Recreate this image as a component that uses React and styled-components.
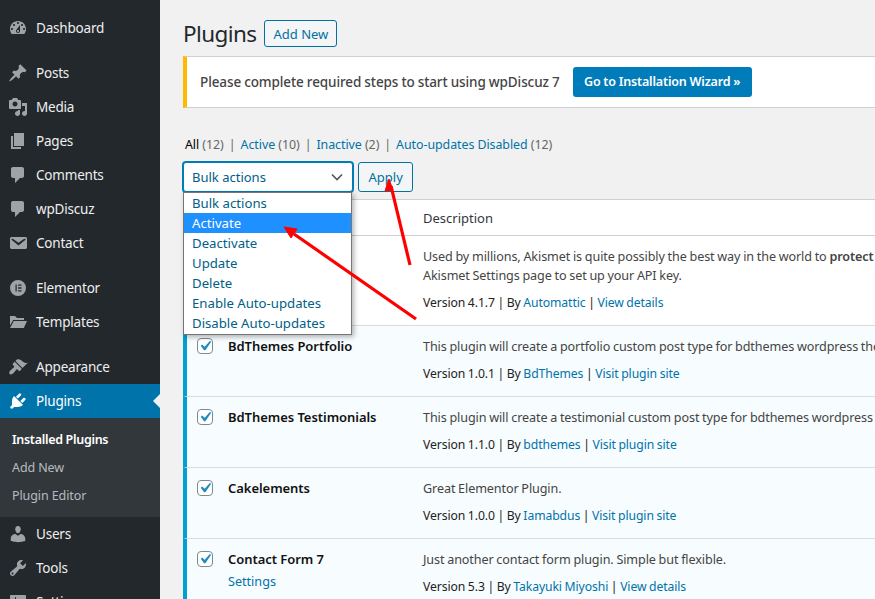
import React from 'react';
import styled, { createGlobalStyle } from 'styled-components';

const GlobalStyle = createGlobalStyle`
  html, body {
    margin: 0;
    padding: 0;
    background: #f1f1f1;
    overflow: hidden;
  }
  body {
    font-family: 'Noto Sans', 'Open Sans', sans-serif;
    font-size: 13px;
    color: #444;
  }
  * {
    box-sizing: border-box;
  }
`;

const Page = styled.div`
  display: flex;
  position: relative;
  width: 875px;
  height: 599px;
  overflow: hidden;
`;

/* sidebar */
const Sidebar = styled.nav`
  flex: 0 0 160px;
  padding-top: 11px;
  background: #23282d;
`;

const MenuItem = styled.div`
  display: flex;
  align-items: center;
  position: relative;
  height: 34px;
  margin-bottom: ${(p) => (p.$sep ? '11px' : '0')};
  padding-left: 8px;
  gap: 8px;
  font-size: 13.5px;
  letter-spacing: -0.2px;
  color: ${(p) => (p.$active ? '#fff' : '#eee')};
  background: ${(p) => (p.$active ? '#0073aa' : 'transparent')};

  svg {
    flex: none;
    width: 20px;
    height: 20px;
    fill: ${(p) => (p.$active ? '#fff' : '#9ea3a8')};
  }

  ${(p) =>
    p.$active &&
    `&::after {
      content: '';
      position: absolute;
      right: 0;
      top: 10px;
      border: 7px solid transparent;
      border-right-color: #f1f1f1;
      border-left-width: 0;
    }`}
`;

const SubMenu = styled.div`
  padding: 8px 0 7px;
  background: #32373c;
`;

const SubItem = styled.div`
  height: 28px;
  padding-left: 12px;
  line-height: 28px;
  font-size: 12.5px;
  font-weight: ${(p) => (p.$current ? 600 : 400)};
  letter-spacing: ${(p) => (p.$current ? '-0.3px' : '-0.1px')};
  color: ${(p) => (p.$current ? '#fff' : 'rgba(240, 245, 250, 0.7)')};
`;

/* main column */
const Main = styled.main`
  flex: 1;
  min-width: 0;
  padding: 20px 0 0 23px;
`;

const TitleRow = styled.div`
  display: flex;
  align-items: center;
  height: 27px;
  gap: 8px;
`;

const Title = styled.h1`
  margin: 0;
  font-size: 22.5px;
  font-weight: 400;
  letter-spacing: -0.6px;
  color: #23282d;
`;

const OutlineButton = styled.button`
  height: ${(p) => p.$height || '27px'};
  padding: 0 ${(p) => p.$pad || '8px'};
  border: 1px solid #0071a1;
  border-radius: 3px;
  background: #f3f5f6;
  font: inherit;
  color: #0071a1;
`;

const Notice = styled.div`
  display: flex;
  align-items: center;
  height: 52px;
  margin-top: 9px;
  padding-left: 13px;
  gap: 13px;
  background: #fff;
  border: 1px solid #ccd0d4;
  border-width: 1px 0 1px 4px;
  border-left-color: #ffb900;
  font-size: 13.5px;
  font-weight: 500;
  letter-spacing: -0.1px;
  word-spacing: -0.3px;
  color: #444;
`;

const WizardButton = styled.div`
  height: 30px;
  padding: 0 11.5px;
  border-radius: 3px;
  background: #007cba;
  color: #fff;
  line-height: 30px;
  font-size: 12.5px;
  font-weight: 600;
  letter-spacing: -0.15px;
`;

const Filters = styled.div`
  display: flex;
  height: 20px;
  margin-top: 26px;
  padding-left: 2px;
  line-height: 21px;
  gap: 5px;
  font-size: 12.4px;
  letter-spacing: -0.05px;
  color: #666;
  white-space: pre;
`;

const Link = styled.a`
  color: #0073aa;
`;

const CurrentFilter = styled.span`
  color: #000;
`;

const Toolbar = styled.div`
  display: flex;
  position: relative;
  height: 30px;
  margin-top: 8px;
  gap: 5px;
  z-index: 2;
`;

const Select = styled.div`
  display: flex;
  align-items: center;
  justify-content: space-between;
  width: 170px;
  padding: 0 8px;
  border: 1px solid #007cba;
  border-radius: 3px;
  box-shadow: 0 0 0 1px #007cba;
  background: #fff;
  color: #016087;
`;

const Dropdown = styled.div`
  position: absolute;
  left: 0;
  top: 30px;
  width: 169px;
  padding: 0 0 1px;
  border: 1px solid #767676;
  background: #fff;
  box-shadow: 2px 2px 5px rgba(0, 0, 0, 0.3);
`;

const Option = styled.div`
  height: 20px;
  padding-left: 8px;
  line-height: 20px;
  font-size: 13.2px;
  color: ${(p) => (p.$selected ? '#fff' : '#016087')};
  background: ${(p) => (p.$selected ? '#1e90ff' : 'transparent')};
`;

/* plugin table */
const Table = styled.div`
  width: 1100px;
  margin-top: 7px;
  background: #fff;
  border-top: 1px solid #ccd0d4;
`;

const HeadRow = styled.div`
  height: 36px;
  padding-left: 240px;
  border-bottom: 1px solid #ccd0d4;
  line-height: 36px;
  color: #32373c;
`;

const Row = styled.div`
  display: grid;
  grid-template-columns: 41px 195px 1fr;
  height: ${(p) => p.$height || '71px'};
  padding-top: 11px;
  border-left: 4px solid ${(p) => (p.$active ? '#00a0d2' : '#fff')};
  border-bottom: 1px solid #dcdcde;
  background: ${(p) => (p.$active ? '#f7fcfe' : '#fff')};
  line-height: 19px;
`;

const CheckCell = styled.div`
  padding: 1px 0 0 10px;
`;

const CheckBox = styled.div`
  display: flex;
  align-items: center;
  justify-content: center;
  width: 16px;
  height: 16px;
  border: 1px solid #7e8993;
  border-radius: 4px;
  background: #fff;

  svg {
    flex: none;
    width: 20px;
    height: 20px;
    fill: #1e8cbe;
  }
`;

const PluginName = styled.div`
  font-weight: 600;
  letter-spacing: -0.05px;
  color: #111;
`;

const RowAction = styled.div`
  margin-top: 3px;
  font-size: 12.6px;
`;

const Desc = styled.div`
  font-size: 12.6px;
  letter-spacing: -0.1px;
  word-spacing: -0.4px;
  white-space: nowrap;
  color: #444;

  strong {
    font-weight: 600;
  }
`;

const Meta = styled.div`
  margin-top: 8px;
  font-size: 12.2px;
  letter-spacing: -0.1px;
  word-spacing: -0.4px;
  white-space: nowrap;
  color: #222;
`;

const Arrows = styled.svg`
  position: absolute;
  left: 0;
  top: 0;
  z-index: 3;
  pointer-events: none;
`;

const icons = {
  dashboard:
    'M3.76 16h12.48c1.1-1.37 1.76-3.11 1.76-5 0-4.42-3.58-8-8-8s-8 3.58-8 8c0 1.89.66 3.63 1.76 5zM10 4c.55 0 1 .45 1 1s-.45 1-1 1-1-.45-1-1 .45-1 1-1zM6 6c.55 0 1 .45 1 1s-.45 1-1 1-1-.45-1-1 .45-1 1-1zm8 0c.55 0 1 .45 1 1s-.45 1-1 1-1-.45-1-1 .45-1 1-1zm-5.37 5.55L12 7v6c0 1.1-.9 2-2 2s-2-.9-2-2c0-.57.24-1.08.63-1.45zM4 10c.55 0 1 .45 1 1s-.45 1-1 1-1-.45-1-1 .45-1 1-1zm12 0c.55 0 1 .45 1 1s-.45 1-1 1-1-.45-1-1 .45-1 1-1zm-5 3c0-.55-.45-1-1-1s-1 .45-1 1 .45 1 1 1 1-.45 1-1z',
  post: 'M10.44 3.02l1.82-1.82 6.36 6.35-1.83 1.82c-1.05-.68-2.48-.57-3.41.36l-.75.75c-.92.93-1.04 2.35-.35 3.41l-1.83 1.82-2.41-2.41-2.8 2.79c-.42.42-3.38 2.71-3.8 2.29s1.86-3.39 2.28-3.81l2.79-2.79L4.1 9.36l1.83-1.82c1.05.69 2.48.57 3.4-.36l.75-.75c.93-.92 1.05-2.35.36-3.41z',
  media:
    'M13 11V4c0-.55-.45-1-1-1h-1.67L9 1H5L3.67 3H2c-.55 0-1 .45-1 1v7c0 .55.45 1 1 1h10c.55 0 1-.45 1-1zM7 4.5c1.38 0 2.5 1.12 2.5 2.5S8.38 9.5 7 9.5 4.5 8.38 4.5 7 5.62 4.5 7 4.5zM14 6h5v10.5c0 1.38-1.12 2.5-2.5 2.5S14 17.88 14 16.5s1.12-2.5 2.5-2.5c.17 0 .34.02.5.05V9h-3V6zm-4 8.05V13h2v3.5c0 1.38-1.12 2.5-2.5 2.5S7 17.88 7 16.5 8.12 14 9.5 14c.17 0 .34.02.5.05z',
  page: 'M6 15V2h10v13H6zm-1 1h8v2H3V5h2v11z',
  comment:
    'M5 2h9c1.1 0 2 .9 2 2v7c0 1.1-.9 2-2 2h-2l-5 5v-5H5c-1.1 0-2-.9-2-2V4c0-1.1.9-2 2-2z',
  email:
    'M3.87 4h13.25C18.37 4 19 4.59 19 5.79v8.42c0 1.19-.63 1.79-1.88 1.79H3.87c-1.25 0-1.88-.6-1.88-1.79V5.79c0-1.2.63-1.79 1.88-1.79zm6.62 8.6l6.74-5.53c.24-.2.43-.66.13-1.07-.29-.41-.82-.42-1.17-.17l-5.7 3.86L4.8 5.83c-.35-.25-.88-.24-1.17.17-.3.41-.11.87.13 1.07z',
  elementor:
    'M10 2a8 8 0 1 0 0 16 8 8 0 0 0 0-16zM7.5 6.5h1.2v7H7.5zm2.6 0h3.4v1.3h-3.4zm0 2.85h3.4v1.3h-3.4zm0 2.85h3.4v1.3h-3.4z',
  folder: 'M2 4h5l2 2h7v2H5.2L2 13.5zM5.8 9H19l-3.2 7H2z',
  appearance:
    'M14.48 11.06L7.41 3.99l1.5-1.5c.5-.56 2.3-.47 3.51.32 1.21.8 1.43 1.28 2.91 2.1 1.18.64 2.45 1.26 4.45.85zm-.71.71L6.7 4.7 4.93 6.47c-.39.39-.39 1.02 0 1.41l1.06 1.06c.39.39.39 1.03 0 1.42-.6.6-3.4 2.5-4.4 4.2-.5.9-.6 1.7.1 2.4.7.7 1.5.6 2.4.1 1.7-1 3.6-3.8 4.2-4.4.39-.39 1.03-.39 1.42 0l1.06 1.06c.39.39 1.02.39 1.41 0z',
  plugin:
    'M13.11 4.36L9.87 7.6 8 5.73l3.24-3.24c.35-.34 1.05-.2 1.56.32.52.51.66 1.21.31 1.55zm-8 1.77l.91-1.12 9.01 9.01-1.19.84c-.71.71-2.63 1.16-3.82 1.16H6.14L4.9 17.26c-.59.59-1.54.59-2.12 0-.59-.58-.59-1.53 0-2.12l1.24-1.24v-3.88c0-1.13.4-3.19 1.09-3.89zm7.26 3.97l3.24-3.24c.34-.35 1.04-.21 1.55.31.52.51.66 1.21.31 1.55l-3.24 3.25z',
  users:
    'M10 9.25c-2.27 0-2.73-3.44-2.73-3.44C7 4.02 7.82 2 9.97 2c2.16 0 2.98 2.02 2.71 3.81 0 0-.41 3.44-2.68 3.44zm0 2.57L12.72 10c2.39 0 4.52 2.33 4.52 4.53v2.49s-3.65 1.13-7.24 1.13c-3.65 0-7.24-1.13-7.24-1.13v-2.49c0-2.25 1.94-4.48 4.47-4.48z',
  tools:
    'M16.68 9.77c-1.34 1.34-3.3 1.67-4.95.99l-5.41 6.52c-.99.99-2.59.99-3.58 0s-.99-2.59 0-3.57l6.52-5.42c-.68-1.65-.35-3.61.99-4.95 1.28-1.28 3.12-1.62 4.72-1.06l-2.89 2.89 2.82 2.82 2.86-2.87c.53 1.58.18 3.39-1.08 4.65zM3.81 16.21c.4.39 1.04.39 1.43 0 .4-.4.4-1.04 0-1.43-.39-.4-1.03-.4-1.43 0-.39.39-.39 1.03 0 1.43z',
  settings:
    'M18 16V4c0-.55-.45-1-1-1H3c-.55 0-1 .45-1 1v12c0 .55.45 1 1 1h14c.55 0 1-.45 1-1zM8 11h1c.55 0 1 .45 1 1s-.45 1-1 1H8v1.5c0 .28-.22.5-.5.5s-.5-.22-.5-.5V13H6c-.55 0-1-.45-1-1s.45-1 1-1h1V5.5c0-.28.22-.5.5-.5s.5.22.5.5V7h1c.55 0 1 .45 1 1s-.45 1-1 1h-1v5.5c0 .28-.22.5-.5.5s-.5-.22-.5-.5V9z',
};

const Icon = ({ name }) => (
  <svg viewBox="0 0 20 20">
    <path fillRule="evenodd" d={icons[name]} />
  </svg>
);

const bulkOptions = [
  'Bulk actions',
  'Activate',
  'Deactivate',
  'Update',
  'Delete',
  'Enable Auto-updates',
  'Disable Auto-updates',
];

const plugins = [
  {
    name: 'BdThemes Portfolio',
    desc: 'This plugin will create a portfolio custom post type for bdthemes wordpress theme and more',
    version: '1.0.1',
    by: 'BdThemes',
    link: 'Visit plugin site',
  },
  {
    name: 'BdThemes Testimonials',
    desc: 'This plugin will create a testimonial custom post type for bdthemes wordpress theme and more',
    version: '1.1.0',
    by: 'bdthemes',
    link: 'Visit plugin site',
  },
  {
    name: 'Cakelements',
    desc: 'Great Elementor Plugin.',
    version: '1.0.0',
    by: 'Iamabdus',
    link: 'Visit plugin site',
  },
  {
    name: 'Contact Form 7',
    action: 'Settings',
    desc: 'Just another contact form plugin. Simple but flexible.',
    version: '5.3',
    by: 'Takayuki Miyoshi',
    link: 'View details',
  },
];

const Check = () => (
  <CheckBox>
    <svg viewBox="0 0 20 20">
      <path d="M14.83 4.89l1.34.94-5.81 8.38H9.02L5.78 9.67l1.34-1.25 2.57 2.4z" />
    </svg>
  </CheckBox>
);

const Version = ({ version, by, link }) => (
  <Meta>
    Version {version} | By <Link>{by}</Link> | <Link>{link}</Link>
  </Meta>
);

const App = () => {
  return (
    <Page>
      <GlobalStyle />
      <Sidebar>
        <MenuItem $sep><Icon name="dashboard" />Dashboard</MenuItem>
        <MenuItem><Icon name="post" />Posts</MenuItem>
        <MenuItem><Icon name="media" />Media</MenuItem>
        <MenuItem><Icon name="page" />Pages</MenuItem>
        <MenuItem><Icon name="comment" />Comments</MenuItem>
        <MenuItem><Icon name="comment" />wpDiscuz</MenuItem>
        <MenuItem $sep><Icon name="email" />Contact</MenuItem>
        <MenuItem><Icon name="elementor" />Elementor</MenuItem>
        <MenuItem $sep><Icon name="folder" />Templates</MenuItem>
        <MenuItem><Icon name="appearance" />Appearance</MenuItem>
        <MenuItem $active><Icon name="plugin" />Plugins</MenuItem>
        <SubMenu>
          <SubItem $current>Installed Plugins</SubItem>
          <SubItem>Add New</SubItem>
          <SubItem>Plugin Editor</SubItem>
        </SubMenu>
        <MenuItem><Icon name="users" />Users</MenuItem>
        <MenuItem><Icon name="tools" />Tools</MenuItem>
        <MenuItem><Icon name="settings" />Settings</MenuItem>
      </Sidebar>

      <Main>
        <TitleRow>
          <Title>Plugins</Title>
          <OutlineButton>Add New</OutlineButton>
        </TitleRow>

        <Notice>
          Please complete required steps to start using wpDiscuz 7
          <WizardButton>Go to Installation Wizard »</WizardButton>
        </Notice>

        <Filters>
          <span><CurrentFilter>All</CurrentFilter> (12)</span>|
          <span><Link>Active</Link> (10)</span>|
          <span><Link>Inactive</Link> (2)</span>|
          <span><Link>Auto-updates Disabled</Link> (12)</span>
        </Filters>

        <Toolbar>
          <Select>
            Bulk actions
            <svg width="14" height="14" viewBox="0 0 14 14" fill="none" stroke="#555" strokeWidth="1.6">
              <path d="M2 4.5l5 5 5-5" />
            </svg>
          </Select>
          <OutlineButton $height="30px" $pad="9.5px">Apply</OutlineButton>
          <Dropdown>
            {bulkOptions.map((option) => (
              <Option key={option} $selected={option === 'Activate'}>{option}</Option>
            ))}
          </Dropdown>
        </Toolbar>

        <Table>
          <HeadRow>Description</HeadRow>
          <Row $height="90px">
            <CheckCell />
            <div />
            <div>
              <Desc>
                Used by millions, Akismet is quite possibly the best way in the world to <strong>protect</strong>
              </Desc>
              <Desc>Akismet Settings page to set up your API key.</Desc>
              <Version version="4.1.7" by="Automattic" link="View details" />
            </div>
          </Row>
          {plugins.map((plugin) => (
            <Row key={plugin.name} $active>
              <CheckCell><Check /></CheckCell>
              <div>
                <PluginName>{plugin.name}</PluginName>
                {plugin.action && <RowAction><Link>{plugin.action}</Link></RowAction>}
              </div>
              <div>
                <Desc>{plugin.desc}</Desc>
                <Version version={plugin.version} by={plugin.by} link={plugin.link} />
              </div>
            </Row>
          ))}
        </Table>
      </Main>

      <Arrows width="875" height="599" viewBox="0 0 875 599">
        <g fill="#f00" stroke="#f00" strokeWidth="3.2">
          <line x1="410" y1="265" x2="391" y2="186" />
          <path strokeWidth="1" d="M389 179l4 11-8 1z" />
          <line x1="416" y1="319" x2="294" y2="234" />
          <path strokeWidth="1" d="M284 227l13 2-6 9z" />
        </g>
      </Arrows>
    </Page>
  );
};

export default App;
